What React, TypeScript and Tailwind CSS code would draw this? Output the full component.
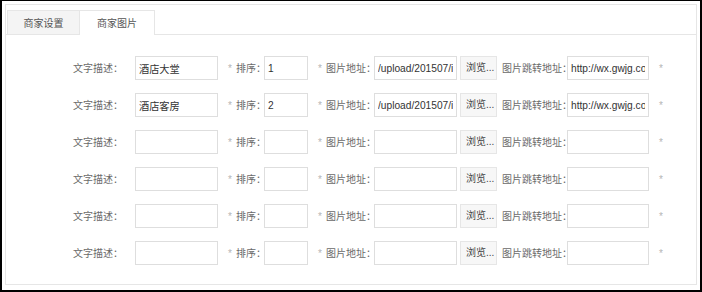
import React from "react";

type Row = { desc: string; sort: string; img: string; link: string };

const rows: Row[] = [
  { desc: "酒店大堂", sort: "1", img: "/upload/201507/img0712.jpg", link: "http://wx.gwjg.com/" },
  { desc: "酒店客房", sort: "2", img: "/upload/201507/img0713.jpg", link: "http://wx.gwjg.com/" },
  { desc: "", sort: "", img: "", link: "" },
  { desc: "", sort: "", img: "", link: "" },
  { desc: "", sort: "", img: "", link: "" },
  { desc: "", sort: "", img: "", link: "" },
];

const font = { fontFamily: '"Liberation Sans", "Noto Sans CJK SC", sans-serif' };

function Field({ value, width }: { value: string; width: string }) {
  return (
    <input
      readOnly
      value={value}
      className={`h-[24px] ${width} shrink-0 border border-[#dedede] bg-white px-[3px] text-[10.2px] text-[#333] outline-none`}
      style={font}
    />
  );
}

function Star() {
  return <span className="inline-block w-[8px] text-[#b5b5b5]">*</span>;
}

function FormRow({ row }: { row: Row }) {
  return (
    <div className="flex h-[24px] items-center pl-[67px] text-[10px] text-[#6a6a6a]">
      <span className="w-[62px] shrink-0 whitespace-nowrap">文字描述：</span>
      <Field value={row.desc} width="w-[83px]" />
      <span className="ml-[10px] w-[36px] shrink-0 whitespace-nowrap">
        <Star />
        排序：
      </span>
      <Field value={row.sort} width="w-[44px]" />
      <span className="ml-[10px] w-[56px] shrink-0 whitespace-nowrap">
        <Star />
        图片地址：
      </span>
      <Field value={row.img} width="w-[83px]" />
      <button
        type="button"
        className="ml-[3px] flex h-[24px] w-[37px] shrink-0 items-start whitespace-nowrap border border-[#e6e6e6] bg-[#f7f7f7] pl-[5px] pt-[3px] text-[10px] text-[#444]"
      >
        浏览...
      </button>
      <span className="ml-[5px] w-[65px] shrink-0 whitespace-nowrap">图片跳转地址：</span>
      <Field value={row.link} width="w-[82px]" />
      <span className="ml-[10px] text-[#b5b5b5]">*</span>
    </div>
  );
}

export default function App() {
  return (
    <div
      className="h-[292px] w-[702px] border-b-2 border-l-2 border-r-2 border-t border-black bg-white"
      style={font}
    >
      <div className="ml-[3px] mt-[3px] h-[281px] w-[692px] border border-[#e6e6e6]">
        <div className="mt-[5px] flex border-b border-[#e6e6e6] pl-[1px] text-[10px] text-[#555]">
          <div className="flex h-[24px] w-[73px] items-center justify-center border border-b-0 border-[#e6e6e6] bg-[#f4f4f4] pt-[2px]">
            商家设置
          </div>
          <div className="-mb-px flex h-[25px] w-[75px] items-center justify-center border border-b-0 border-l-0 border-[#e6e6e6] bg-white pt-[1px]">
            商家图片
          </div>
        </div>
        <div className="mt-[21px] flex flex-col gap-[13px]">
          {rows.map((r, i) => (
            <FormRow key={i} row={r} />
          ))}
        </div>
      </div>
    </div>
  );
}
